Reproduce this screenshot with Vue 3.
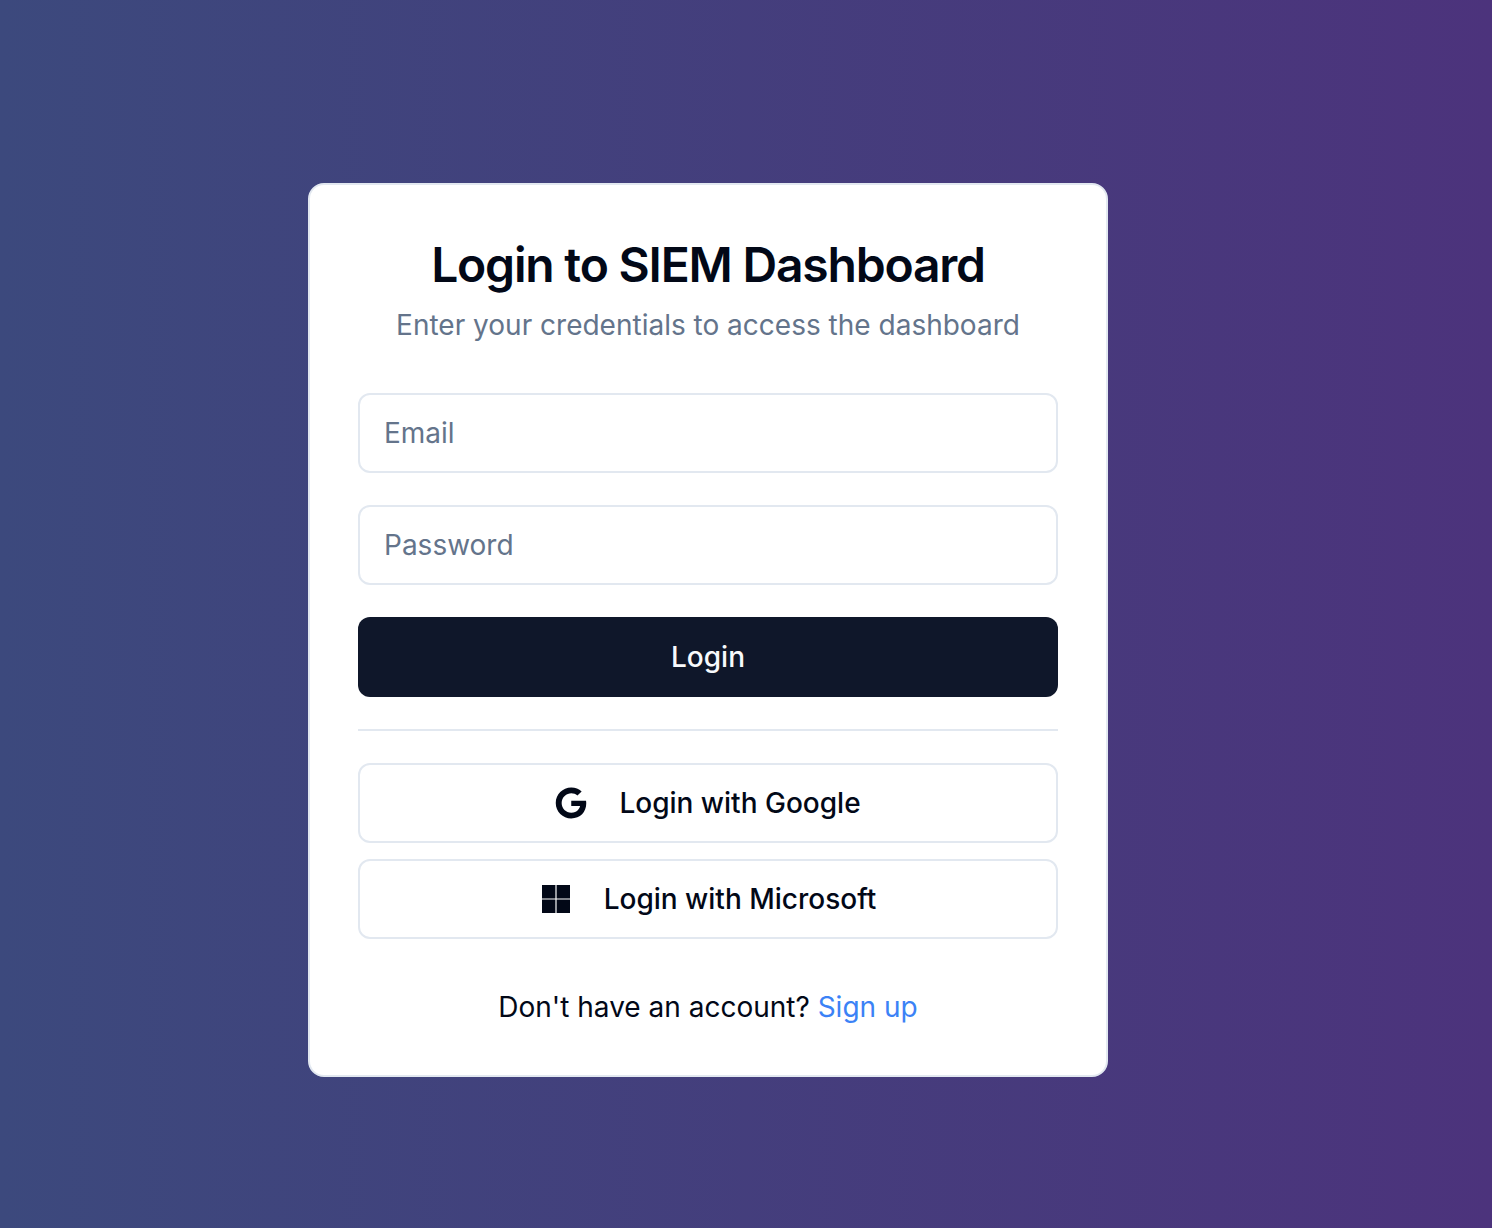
<script setup>
import { ref } from 'vue'

const email = ref('')
const password = ref('')
</script>

<template>
  <main class="page">
    <section class="card">
      <header class="card-header">
        <h1 class="title">Login to SIEM Dashboard</h1>
        <p class="subtitle">Enter your credentials to access the dashboard</p>
      </header>

      <form class="form" @submit.prevent>
        <input v-model="email" class="field" type="email" placeholder="Email" aria-label="Email" />
        <input v-model="password" class="field" type="password" placeholder="Password" aria-label="Password" />
        <button class="button primary" type="submit">Login</button>
      </form>

      <hr class="separator" />

      <div class="providers">
        <button class="button outline" type="button">
          <svg class="icon" viewBox="0 0 488 512" fill="currentColor" aria-hidden="true">
            <path d="M488 261.8C488 403.3 391.1 504 248 504 110.8 504 0 393.2 0 256S110.8 8 248 8c66.8 0 123 24.5 166.3 64.9l-67.5 64.9C258.5 52.6 94.3 116.6 94.3 256c0 86.5 69.1 156.6 153.7 156.6 98.2 0 135-70.4 140.8-106.9H248v-85.3h236.1c2.3 12.7 3.9 24.9 3.9 41.4z" />
          </svg>
          <span>Login with Google</span>
        </button>
        <button class="button outline" type="button">
          <svg class="icon" viewBox="0 0 448 512" fill="currentColor" aria-hidden="true">
            <path d="M0 32h214.6v214.6H0V32zm233.4 0H448v214.6H233.4V32zM0 265.4h214.6V480H0V265.4zm233.4 0H448V480H233.4V265.4z" />
          </svg>
          <span>Login with Microsoft</span>
        </button>
      </div>

      <p class="signup">Don't have an account? <a href="#signup">Sign up</a></p>
    </section>
  </main>
</template>

<style>
body {
  margin: 0;
}
</style>

<style scoped>
.page {
  box-sizing: border-box;
  min-height: 100vh;
  padding: 32px 76px 0 0;
  display: flex;
  align-items: center;
  justify-content: center;
  background: linear-gradient(to right, #3c497d, #4c337c);
  color: #020817;
  font-family: Inter, "Liberation Sans", sans-serif;
  font-size: 28px;
  line-height: 40px;
}

.card {
  box-sizing: border-box;
  width: 100%;
  max-width: 800px;
  padding: 48px;
  border: 2px solid #e2e8f0;
  border-radius: 16px;
  background: #fff;
}

.card-header {
  display: flex;
  flex-direction: column;
  gap: 8px;
  margin-bottom: 48px;
  text-align: center;
}

.title {
  margin: 0;
  font-size: 48px;
  font-weight: 600;
  line-height: 64px;
  letter-spacing: -0.025em;
}

.subtitle {
  margin: 0;
  color: #64748b;
}

.form {
  display: flex;
  flex-direction: column;
  gap: 32px;
}

.field {
  box-sizing: border-box;
  width: 100%;
  height: 80px;
  padding: 0 24px;
  border: 2px solid #e2e8f0;
  border-radius: 12px;
  background: #fff;
  color: inherit;
  font: inherit;
}

.field::placeholder {
  color: #64748b;
  opacity: 1;
}

.button {
  box-sizing: border-box;
  display: flex;
  align-items: center;
  justify-content: center;
  gap: 32px;
  width: 100%;
  height: 80px;
  padding: 0 32px;
  border: 0;
  border-radius: 12px;
  font: inherit;
  font-weight: 500;
  cursor: pointer;
}

.primary {
  background: #0f172a;
  color: #f8fafc;
}

.outline {
  border: 2px solid #e2e8f0;
  background: #fff;
  color: #020817;
}

.icon {
  width: 32px;
  height: 32px;
}

.separator {
  height: 2px;
  margin: 32px 0;
  border: 0;
  background: #e2e8f0;
}

.providers {
  display: flex;
  flex-direction: column;
  gap: 16px;
}

.signup {
  margin: 48px 0 0;
  text-align: center;
}

.signup a {
  color: #3b82f6;
  text-decoration: none;
}
</style>
